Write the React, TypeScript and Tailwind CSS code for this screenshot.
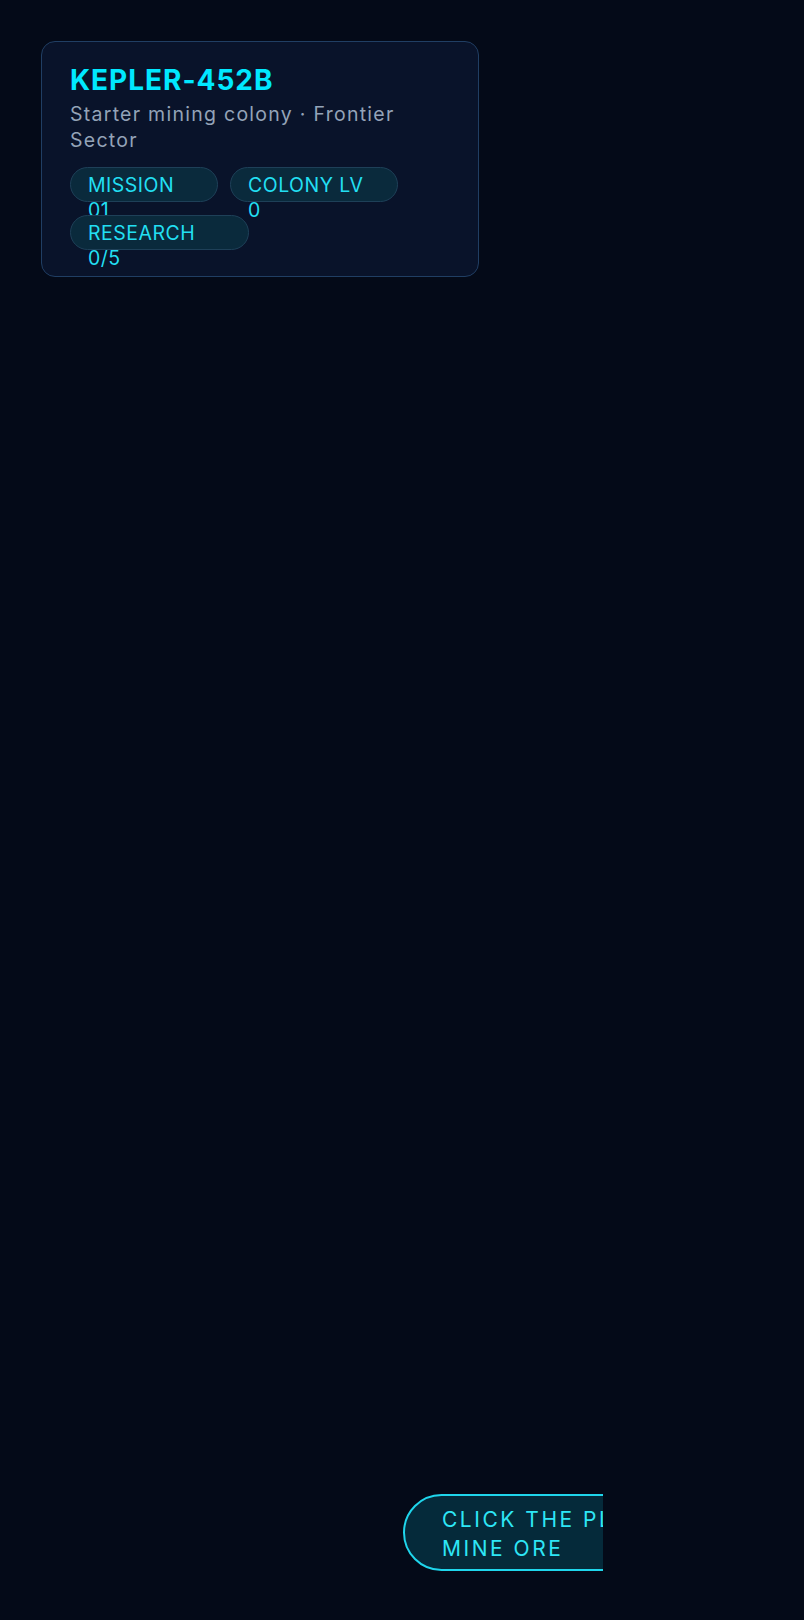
import React from "react";

const stats = [
  { label: "MISSION", value: "01", w: "w-[148px]" },
  { label: "COLONY LV", value: "0", w: "w-[168px]" },
  { label: "RESEARCH", value: "0/5", w: "w-[179px]" },
];

export default function App() {
  return (
    <div
      className="relative min-h-[1620px] w-full overflow-hidden bg-[#040a18]"
      style={{ fontFamily: "Inter, 'Noto Sans', sans-serif" }}
    >
      <div className="pl-[41px] pt-[41px]">
        <div className="w-[438px] rounded-[14px] border border-[#203e63] bg-[#09132a] px-7 pt-6 pb-[26px]">
          <h1 className="text-[28px] font-bold leading-[28px] tracking-[0.035em] text-[#00e8ff]">
            KEPLER-452B
          </h1>
          <p className="mt-2 text-[19.5px] leading-[25.6px] tracking-[0.065em] text-[#94a3b8]">
            Starter mining colony · Frontier Sector
          </p>
          <div className="mt-[14px] flex flex-wrap gap-x-3 gap-y-[13px]">
            {stats.map((s) => (
              <div
                key={s.label}
                className={`${s.w} flex h-[35px] flex-col rounded-full border border-[#1e4058] bg-[#0a2a3c] pl-[17px] pt-[5px] text-[19.5px] leading-[25px] tracking-[0.025em] text-[#22dff2]`}
              >
                <span>{s.label}</span>
                <span>{s.value}</span>
              </div>
            ))}
          </div>
        </div>
      </div>

      <div className="absolute left-[403px] top-[1494px] w-[200px] overflow-hidden">
        <button className="w-[385px] rounded-full border-2 border-[#1fd6ec] bg-[#052a3a] pl-[37px] pr-[37px] pt-[9px] pb-[6px] text-left text-[21px] leading-[29px] tracking-[0.12em] text-[#2ee6f6]">
          CLICK THE PLANET TO MINE ORE
        </button>
      </div>
    </div>
  );
}
